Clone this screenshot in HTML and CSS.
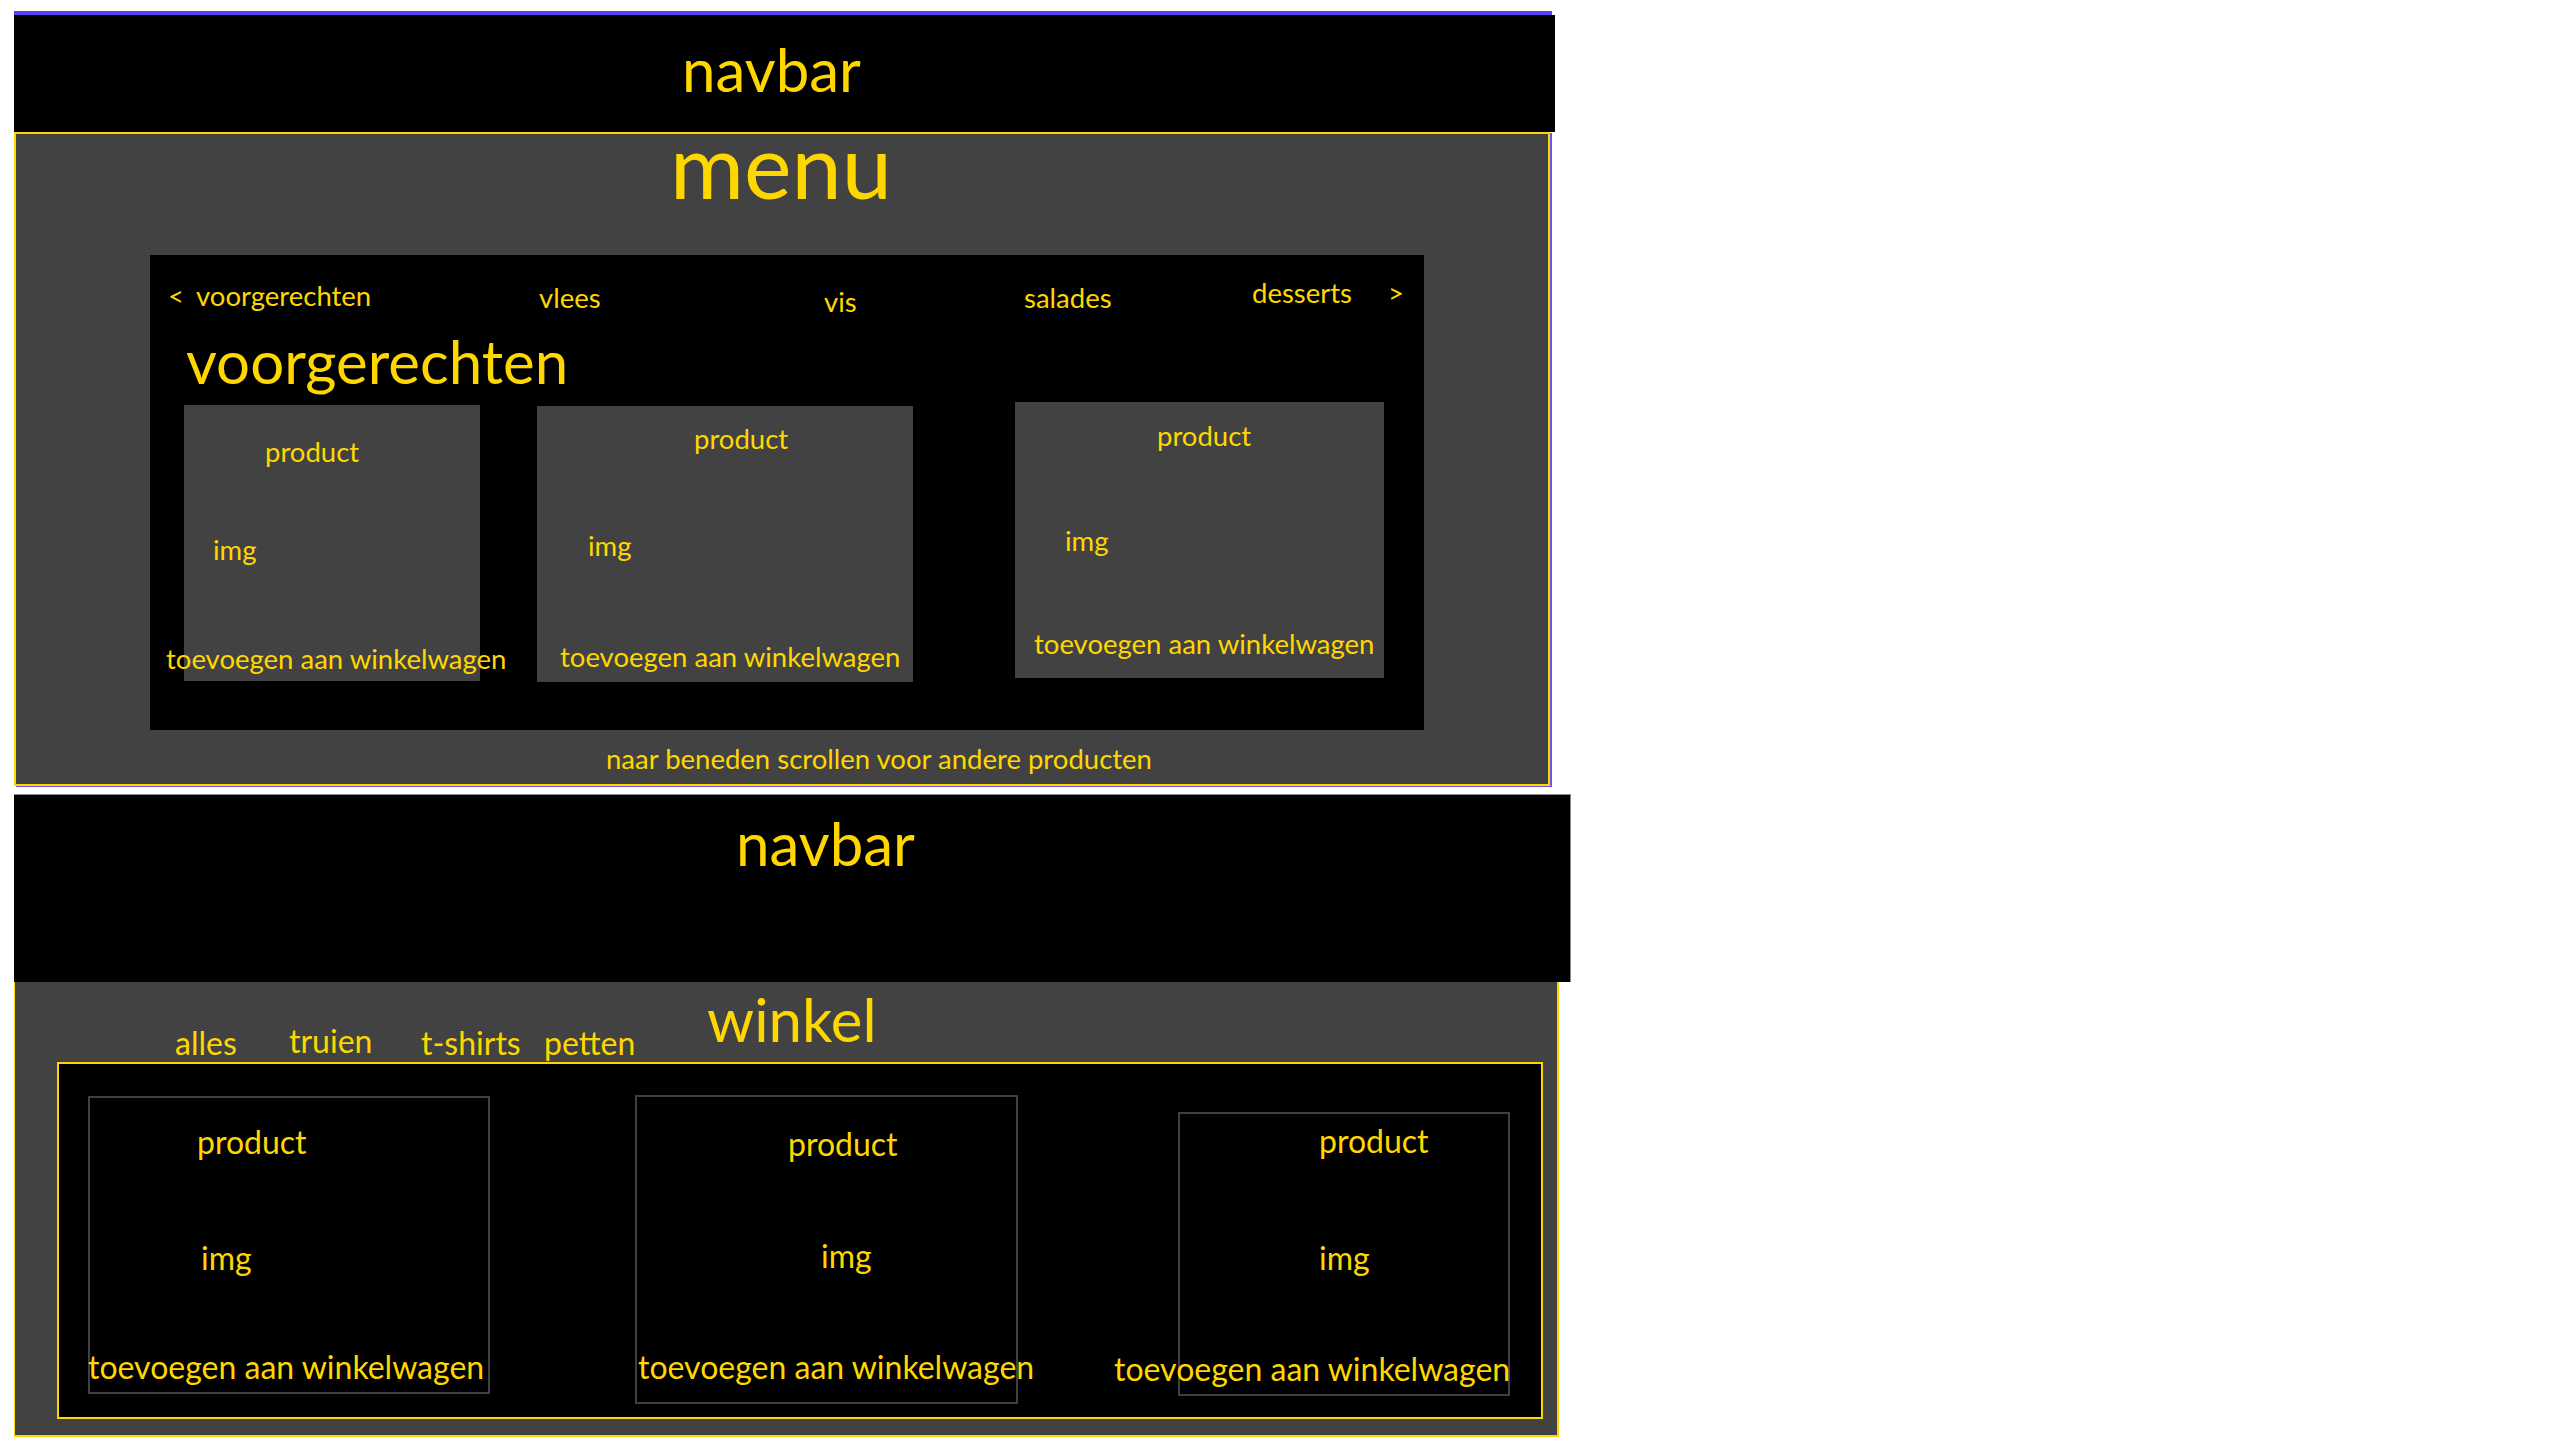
FILE: index.html
```html
<!DOCTYPE html>
<html lang="nl">
<head>
<meta charset="utf-8">
<title>menu / winkel wireframe</title>
<link rel="stylesheet" href="styles.css">
</head>
<body>
<div class="page">
  <section class="screen screen-menu">
    <header class="navbar navbar-menu">navbar</header>
    <main class="menu-area">
      <h1 class="menu-title">menu</h1>
      <div class="board">
        <nav class="tabs">
          <span class="tab tab-lt">&lt;</span>
          <span class="tab tab-voor">voorgerechten</span>
          <span class="tab tab-vlees">vlees</span>
          <span class="tab tab-vis">vis</span>
          <span class="tab tab-salades">salades</span>
          <span class="tab tab-desserts">desserts</span>
          <span class="tab tab-gt">&gt;</span>
        </nav>
        <h2 class="board-title">voorgerechten</h2>
        <div class="dishes">
          <article class="dish dish-1">
            <span class="dish-name">product</span>
            <span class="dish-img">img</span>
            <span class="dish-add">toevoegen aan winkelwagen</span>
          </article>
          <article class="dish dish-2">
            <span class="dish-name">product</span>
            <span class="dish-img">img</span>
            <span class="dish-add">toevoegen aan winkelwagen</span>
          </article>
          <article class="dish dish-3">
            <span class="dish-name">product</span>
            <span class="dish-img">img</span>
            <span class="dish-add">toevoegen aan winkelwagen</span>
          </article>
        </div>
      </div>
      <p class="scroll-hint">naar beneden scrollen voor andere producten</p>
    </main>
  </section>

  <section class="screen screen-shop">
    <header class="navbar navbar-shop">navbar</header>
    <main class="shop-area">
      <div class="shop-head">
        <span class="cat cat-alles">alles</span>
        <span class="cat cat-truien">truien</span>
        <span class="cat cat-tshirts">t-shirts</span>
        <span class="cat cat-petten">petten</span>
        <h1 class="shop-title">winkel</h1>
      </div>
      <div class="shop-board">
        <article class="item item-1">
          <span class="item-name">product</span>
          <span class="item-img">img</span>
          <span class="item-add">toevoegen aan winkelwagen</span>
        </article>
        <article class="item item-2">
          <span class="item-name">product</span>
          <span class="item-img">img</span>
          <span class="item-add">toevoegen aan winkelwagen</span>
        </article>
        <article class="item item-3">
          <span class="item-name">product</span>
          <span class="item-img">img</span>
          <span class="item-add">toevoegen aan winkelwagen</span>
        </article>
      </div>
    </main>
  </section>
</div>
</body>
</html>
```

FILE: styles.css
```css
* { box-sizing: border-box; }

body {
  margin: 0;
  background: #ffffff;
  font-family: Lato, "Open Sans", sans-serif;
  color: #ffd700;
}

.page {
  padding: 11px 0 0 14px;
}

/* ---------- screen 1: menu ---------- */
.screen-menu {
  width: 1538px;
  border-top: 4px solid #5b3ef2;
}

.navbar {
  background: #000;
  font-size: 60px;
  line-height: 1;
  white-space: nowrap;
}

.navbar-menu {
  width: 1541px;
  height: 117px;
  padding: 24px 0 0 668px;
}

.menu-area {
  width: 1536px;
  height: 654px;
  background: #424242;
  border: 2px solid #ffd700;
  box-shadow: 2px 1px 0 #6a55f0;
}

.menu-title {
  margin: 0 0 61px 0;
  padding-left: 654px;
  font-size: 90px;
  font-weight: normal;
  line-height: 60px;
}

.board {
  margin-left: 134px;
  width: 1274px;
  height: 475px;
  background: #000;
  padding-top: 20px;
}

.tabs {
  display: grid;
  grid-template-columns: 28px 343px 285px 200px 228px 136px auto;
  align-items: start;
  height: 56px;
  padding-left: 18px;
  font-size: 27.5px;
  line-height: 1;
  white-space: nowrap;
}

.tab-lt { margin-top: 7px; }
.tab-voor { margin-top: 7px; }
.tab-vlees { margin-top: 9px; }
.tab-vis { margin-top: 13px; }
.tab-salades { margin-top: 9px; }
.tab-desserts { margin-top: 4px; }
.tab-gt { margin-top: 4px; }

.board-title {
  margin: 0;
  padding-left: 36px;
  font-size: 60px;
  font-weight: normal;
  line-height: 1;
}

.dishes {
  display: flex;
  align-items: flex-start;
  margin-top: 10px;
  padding-left: 34px;
}

.dish {
  display: flex;
  flex-direction: column;
  align-items: flex-start;
  height: 276px;
  background: #424242;
  font-size: 27.5px;
  line-height: 1;
  white-space: nowrap;
}

.dish-1 { width: 296px; margin-top: 4px; }
.dish-2 { width: 376px; margin-top: 5px; margin-left: 57px; }
.dish-3 { width: 369px; margin-top: 1px; margin-left: 102px; }

.dish-1 .dish-name { margin: 33px 0 0 81px; }
.dish-1 .dish-img  { margin: 70px 0 0 29px; }
.dish-1 .dish-add  { margin: 82px 0 0 -18px; }

.dish-2 .dish-name { margin: 19px 0 0 157px; }
.dish-2 .dish-img  { margin: 79px 0 0 51px; }
.dish-2 .dish-add  { margin: 84px 0 0 23px; }

.dish-3 .dish-name { margin: 20px 0 0 142px; }
.dish-3 .dish-img  { margin: 77px 0 0 50px; }
.dish-3 .dish-add  { margin: 76px 0 0 19px; }

.scroll-hint {
  margin: 15px 0 0 0;
  padding-left: 590px;
  font-size: 27.5px;
  line-height: 1;
  white-space: nowrap;
}

/* ---------- screen 2: winkel ---------- */
.screen-shop {
  margin-top: 8px;
  width: 1557px;
}

.navbar-shop {
  width: 1557px;
  height: 188px;
  border-top: 1px solid #8c8c8c;
  border-right: 1px solid #8c8c8c;
  padding: 18px 0 0 722px;
}

.shop-area {
  width: 1545px;
  height: 455px;
  background: #424242;
  border-style: solid;
  border-color: #ffd700;
  border-width: 0 2px 2px 1px;
}

.shop-head {
  display: grid;
  grid-template-columns: 114px 132px 123px 163px auto;
  align-items: start;
  height: 80px;
  padding-left: 160px;
  white-space: nowrap;
}

.cat {
  font-size: 32px;
  line-height: 1;
  margin-top: 45px;
}

.cat-truien { margin-top: 43px; }

.shop-title {
  margin: 7px 0 0 0;
  font-size: 60px;
  font-weight: normal;
  line-height: 1;
}

.shop-board {
  display: flex;
  align-items: flex-start;
  margin-left: 42px;
  width: 1486px;
  height: 357px;
  background: #000;
  border: 2px solid #ffd700;
}

.item {
  display: flex;
  flex-direction: column;
  align-items: flex-start;
  background: #000;
  border: 2px solid #404040;
  font-size: 32px;
  line-height: 1;
  white-space: nowrap;
}

.item-1 { width: 402px; height: 298px; margin: 32px 0 0 29px; }
.item-2 { width: 383px; height: 309px; margin: 31px 0 0 145px; }
.item-3 { width: 332px; height: 284px; margin: 48px 0 0 160px; }

.item-1 .item-name { margin: 28px 0 0 107px; }
.item-1 .item-img  { margin: 84px 0 0 111px; }
.item-1 .item-add  { margin: 77px 0 0 -2px; }

.item-2 .item-name { margin: 31px 0 0 151px; }
.item-2 .item-img  { margin: 80px 0 0 184px; }
.item-2 .item-add  { margin: 79px 0 0 1px; }

.item-3 .item-name { margin: 11px 0 0 139px; }
.item-3 .item-img  { margin: 85px 0 0 139px; }
.item-3 .item-add  { margin: 79px 0 0 -66px; }
```
